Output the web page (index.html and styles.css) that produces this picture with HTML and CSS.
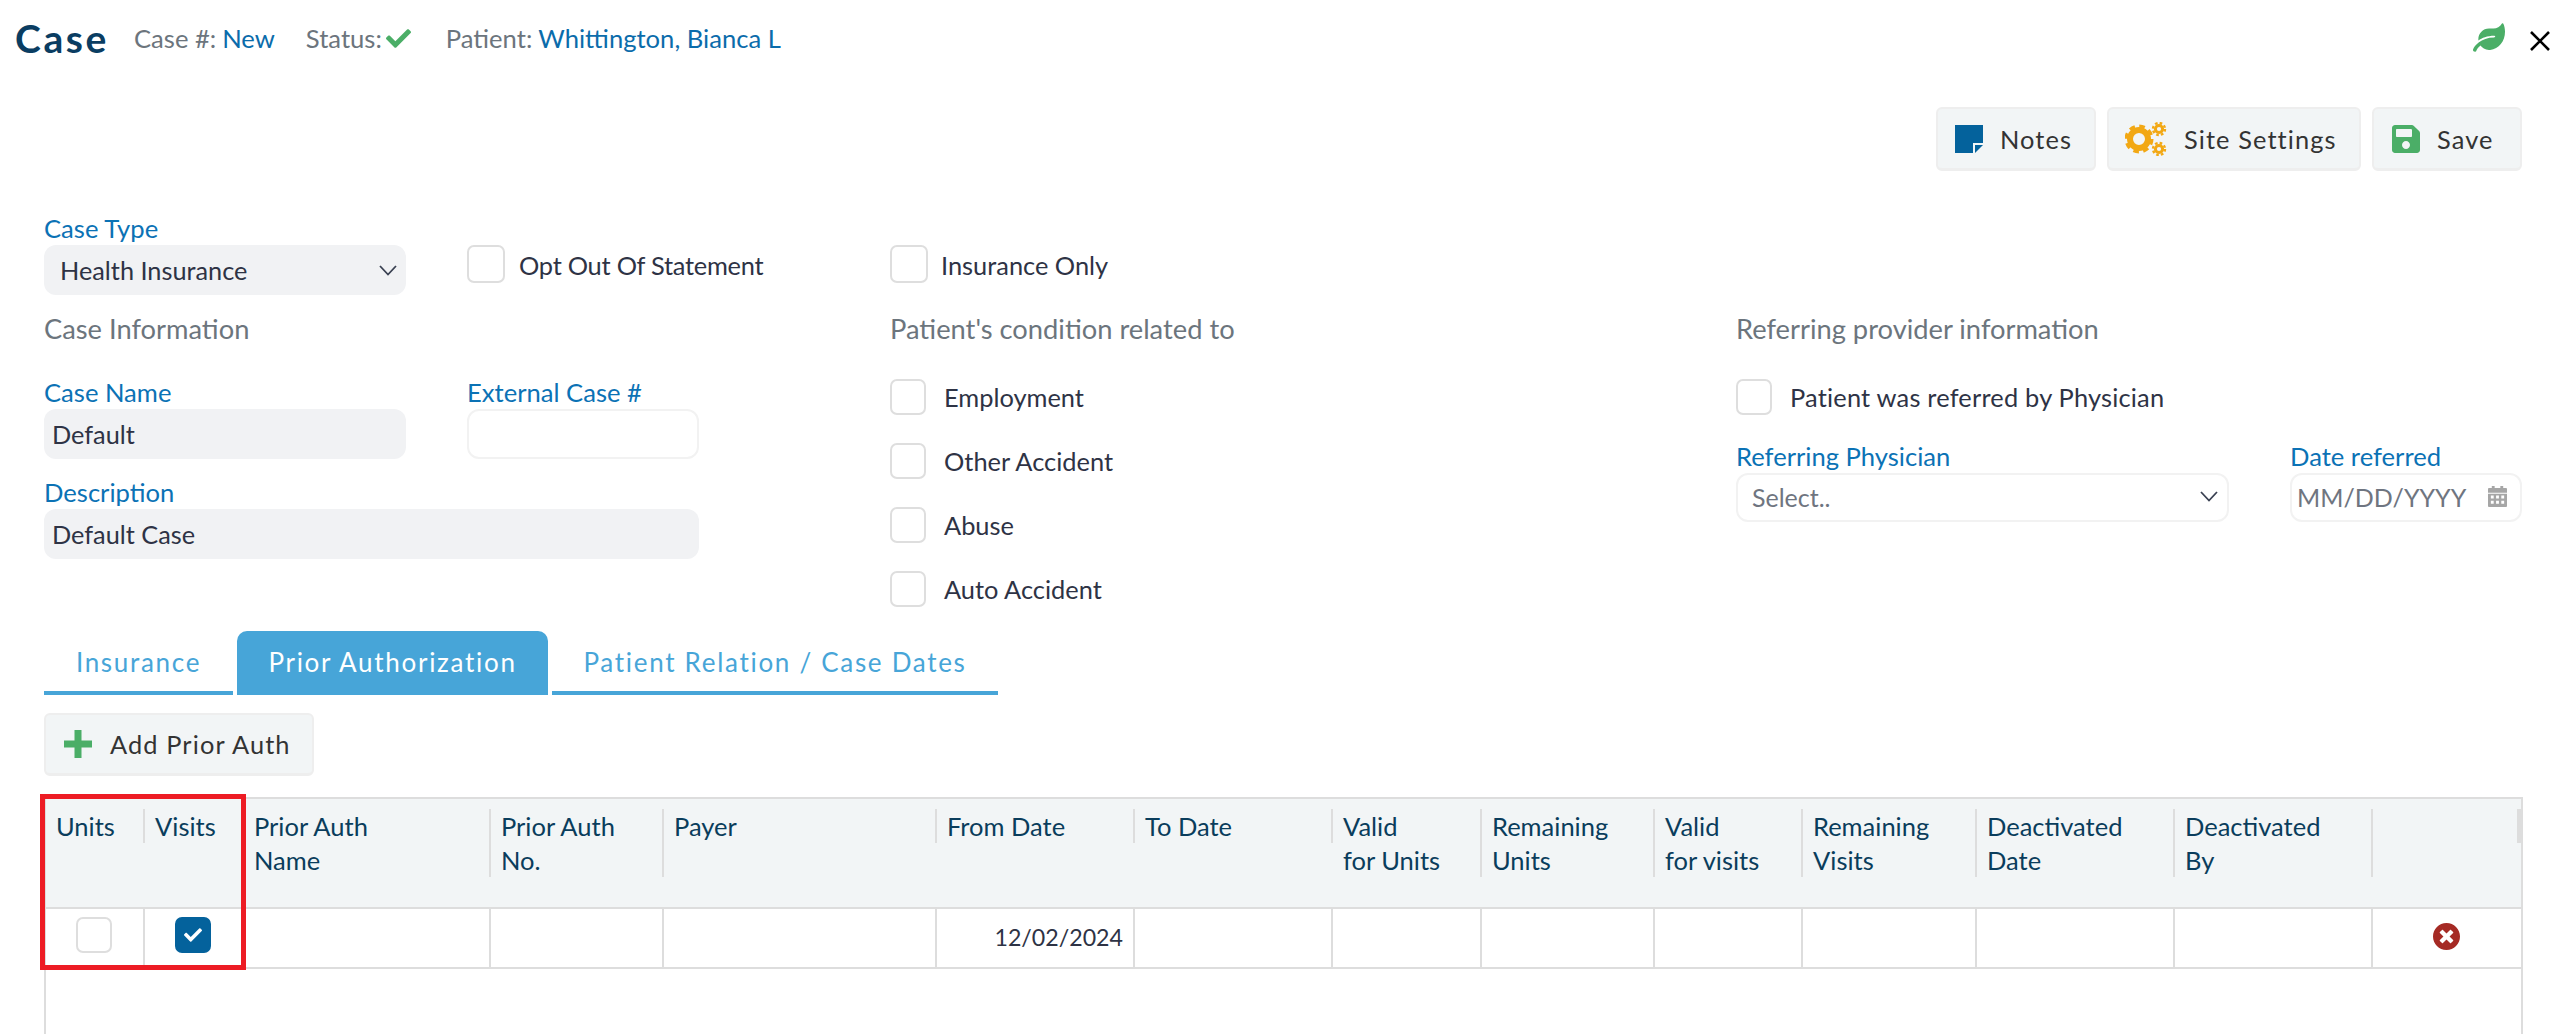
FILE: index.html
```html
<!DOCTYPE html>
<html lang="en">
<head>
<meta charset="utf-8">
<title>Case</title>
<link rel="stylesheet" href="styles.css">
</head>
<body>
<header class="topbar">
  <h1 class="title">Case</h1>
  <div class="meta meta-case"><span class="meta-key">Case #:</span> <span class="meta-val">New</span></div>
  <div class="meta meta-status"><span class="meta-key">Status:</span>
    <svg class="status-check" viewBox="0 0 512 512"><path d="M173.898 439.404l-166.4-166.4c-9.997-9.997-9.997-26.206 0-36.204l36.203-36.204c9.997-9.998 26.207-9.998 36.204 0L192 312.69 432.095 72.596c9.997-9.997 26.207-9.997 36.204 0l36.203 36.204c9.997 9.997 9.997 26.206 0 36.204l-294.4 294.401c-9.998 9.997-26.207 9.997-36.204-.001z"/></svg>
  </div>
  <div class="meta"><span class="meta-key">Patient:</span> <span class="meta-val">Whittington, Bianca L</span></div>
  <div class="top-icons">
    <svg class="leaf" viewBox="0 0 576 512"><path d="M546.2 9.7c-5.6-12.5-21.6-13-28.3-1.2C486.9 62.4 431.4 96 368 96h-80C182 96 96 182 96 288c0 7 .8 13.7 1.5 20.5C161.3 262.8 253.4 224 384 224c8.8 0 16 7.2 16 16s-7.2 16-16 16C132.6 256 26 410.1 2.4 468c-6.6 16.3 1.2 34.9 17.5 41.6 16.4 6.8 35-1.1 41.8-17.3 1.5-3.6 20.9-47.9 71.9-90.6 32.4 43.9 94 85.8 174.9 77.2C465.5 467.5 576 326.7 576 154.3c0-50.2-10.8-102.2-29.8-144.6z"/></svg>
    <svg class="close" viewBox="0 0 20 20"><path d="M1 1L19 19M19 1L1 19"/></svg>
  </div>
</header>

<div class="toolbar">
  <button class="btn btn-notes">
    <svg class="ic-notes" viewBox="0 0 28 28"><path d="M0 0H28V18H18V28H0Z" fill="#04629c"/><path d="M20 20H28L20 28Z" fill="#04629c"/></svg>
    Notes
  </button>
  <button class="btn btn-site">
    <svg class="ic-gears" viewBox="0 0 42 34">
      <g fill="none" stroke="#f2a814">
        <circle cx="14" cy="17" r="9" stroke-width="6"/>
        <circle cx="14" cy="17" r="12.5" stroke-width="4" stroke-dasharray="5.5 4.3"/>
        <circle cx="34" cy="7" r="3.6" stroke-width="3"/>
        <circle cx="34" cy="7" r="6" stroke-width="2.4" stroke-dasharray="2.6 2.1"/>
        <circle cx="34" cy="27" r="3.6" stroke-width="3"/>
        <circle cx="34" cy="27" r="6" stroke-width="2.4" stroke-dasharray="2.6 2.1"/>
      </g>
    </svg>
    Site Settings
  </button>
  <button class="btn btn-save">
    <svg class="ic-save" viewBox="0 32 448 448"><path fill="#4bae67" d="M433.941 129.941l-83.882-83.882A48 48 0 0 0 316.118 32H48C21.49 32 0 53.49 0 80v352c0 26.51 21.49 48 48 48h352c26.51 0 48-21.49 48-48V163.882a48 48 0 0 0-14.059-33.941zM224 416c-35.346 0-64-28.654-64-64 0-35.346 28.654-64 64-64s64 28.654 64 64c0 35.346-28.654 64-64 64zm96-304.52V212c0 6.627-5.373 12-12 12H76c-6.627 0-12-5.373-12-12V108c0-6.627 5.373-12 12-12h228.52c3.183 0 6.235 1.264 8.485 3.515l3.48 3.48A11.996 11.996 0 0 1 320 111.48z"/></svg>
    Save
  </button>
</div>

<main class="content">
  <section class="form-top">
    <div class="col-a top-a">
      <div class="field">
        <label class="label">Case Type</label>
        <div class="control filled select">Health Insurance
          <svg class="chev" viewBox="0 0 18 11"><path d="M1 1L9 9.500L17 1"/></svg>
        </div>
      </div>
      <div class="check-row top-check"><span class="box box-lg"></span><span class="check-text narrow">Opt Out Of Statement</span></div>
    </div>
    <div class="col-b">
      <div class="check-row top-check tight"><span class="box box-lg"></span><span class="check-text">Insurance Only</span></div>
    </div>
  </section>

  <section class="form-main">
    <div class="col-a">
      <h2 class="section-title">Case Information</h2>
      <div class="info-grid">
        <div class="field">
          <label class="label">Case Name</label>
          <div class="control filled small-pad">Default</div>
        </div>
        <div class="field">
          <label class="label">External Case #</label>
          <div class="control empty"></div>
        </div>
        <div class="field span2">
          <label class="label">Description</label>
          <div class="control filled small-pad">Default Case</div>
        </div>
      </div>
    </div>
    <div class="col-b">
      <h2 class="section-title">Patient's condition related to</h2>
      <div class="check-list">
        <div class="check-row"><span class="box"></span><span class="check-text">Employment</span></div>
        <div class="check-row"><span class="box"></span><span class="check-text">Other Accident</span></div>
        <div class="check-row"><span class="box"></span><span class="check-text">Abuse</span></div>
        <div class="check-row"><span class="box"></span><span class="check-text">Auto Accident</span></div>
      </div>
    </div>
    <div class="col-c">
      <h2 class="section-title">Referring provider information</h2>
      <div class="check-list">
        <div class="check-row"><span class="box"></span><span class="check-text wide">Patient was referred by Physician</span></div>
      </div>
      <div class="ref-grid">
        <div class="field">
          <label class="label">Referring Physician</label>
          <div class="control outline select placeholder">Select..
            <svg class="chev" viewBox="0 0 18 11"><path d="M1 1L9 9.500L17 1"/></svg>
          </div>
        </div>
        <div class="field">
          <label class="label">Date referred</label>
          <div class="control outline date placeholder">MM/DD/YYYY
            <svg class="cal" viewBox="0 0 20 22"><path fill="#a6a6a6" d="M4 0h3v3H4zM13 0h3v3h-3zM1 2h18a1 1 0 0 1 1 1v4H0V3a1 1 0 0 1 1-1zM0 8h20v13a1 1 0 0 1-1 1H1a1 1 0 0 1-1-1z"/><path fill="#fff" d="M3 10h3v3H3zM8.500 10h3v3h-3zM14 10h3v3h-3zM3 15.500h3v3H3zM8.500 15.500h3v3h-3zM14 15.500h3v3h-3z"/></svg>
          </div>
        </div>
      </div>
    </div>
  </section>

  <nav class="tabs">
    <a class="tab tab-1">Insurance</a>
    <a class="tab tab-2 active">Prior Authorization</a>
    <a class="tab tab-3">Patient Relation / Case Dates</a>
  </nav>

  <button class="btn btn-add">
    <svg class="ic-plus" viewBox="0 0 28 28"><path d="M14 0V28M0 14H28"/></svg>
    Add Prior Auth
  </button>

  <div class="table-wrap">
    <table class="grid">
      <colgroup>
        <col class="c-99"><col class="c-99"><col class="c-247"><col class="c-173"><col class="c-273"><col class="c-198"><col class="c-198"><col class="c-149"><col class="c-173"><col class="c-148"><col class="c-174"><col class="c-198"><col class="c-198"><col class="c-last">
      </colgroup>
      <thead>
        <tr>
          <th><div class="th">Units</div></th>
          <th><div class="th">Visits</div></th>
          <th><div class="th">Prior Auth<br>Name</div></th>
          <th><div class="th">Prior Auth<br>No.</div></th>
          <th><div class="th">Payer</div></th>
          <th><div class="th">From Date</div></th>
          <th><div class="th">To Date</div></th>
          <th><div class="th">Valid<br>for Units</div></th>
          <th><div class="th">Remaining<br>Units</div></th>
          <th><div class="th">Valid<br>for visits</div></th>
          <th><div class="th">Remaining<br>Visits</div></th>
          <th><div class="th">Deactivated<br>Date</div></th>
          <th><div class="th">Deactivated<br>By</div></th>
          <th><div class="th th-last">&nbsp;</div></th>
        </tr>
      </thead>
      <tbody>
        <tr>
          <td class="center"><span class="box box-sm"></span></td>
          <td class="center"><span class="box box-sm checked"><svg viewBox="0 0 512 512"><path d="M173.898 439.404l-166.4-166.4c-9.997-9.997-9.997-26.206 0-36.204l36.203-36.204c9.997-9.998 26.207-9.998 36.204 0L192 312.69 432.095 72.596c9.997-9.997 26.207-9.997 36.204 0l36.203 36.204c9.997 9.997 9.997 26.206 0 36.204l-294.4 294.401c-9.998 9.997-26.207 9.997-36.204-.001z"/></svg></span></td>
          <td></td><td></td><td></td>
          <td class="right">12/02/2024</td>
          <td></td><td></td><td></td><td></td><td></td><td></td><td></td>
          <td class="center"><svg class="ic-del" viewBox="8 8 496 496"><path d="M256 8C119 8 8 119 8 256s111 248 248 248 248-111 248-248S393 8 256 8zm121.6 313.1c4.7 4.7 4.7 12.3 0 17L338 377.6c-4.7 4.7-12.3 4.7-17 0L256 312l-65.1 65.6c-4.7 4.7-12.3 4.7-17 0L134.4 338c-4.7-4.7-4.7-12.3 0-17l65.6-65-65.6-65.1c-4.7-4.7-4.7-12.3 0-17l39.6-39.6c4.7-4.7 12.3-4.7 17 0l65 65.7 65.1-65.6c4.7-4.7 12.3-4.7 17 0l39.6 39.6c4.700 4.700 4.700 12.300 0 17L312 256l65.600 65.100z"/></svg></td>
        </tr>
      </tbody>
    </table>
    <div class="highlight"></div>
  </div>
</main>
</body>
</html>
```

FILE: styles.css
```css
* { box-sizing: border-box; }
html, body { margin: 0; height: 1034px; overflow: hidden; background: #fff; }
body { font-family: "Lato", "Noto Sans", sans-serif; font-size: 25.4px; color: #2e3345; }

/* Header */
.topbar { display: flex; align-items: center; height: 76px; padding: 0 18px 0 15px; }
.title { margin: 0 27px 0 0; width: 92px; font-size: 39px; font-weight: 700; letter-spacing: 2.6px; color: #0a3d62; line-height: 76px; }
.meta { display: flex; align-items: center; gap: 6px; font-size: 25.6px; margin-right: 32px; height: 40px; white-space: pre; }
.meta-case { margin-right: 31px; }
.meta-status { margin-right: 35px; }
.meta-key { color: #6c757d; }
.meta-val { color: #0b6cab; }
.status-check { width: 25px; height: 25px; fill: #4bae67; margin-left: -2px; }
.top-icons { margin-left: auto; display: flex; align-items: center; gap: 25px; }
.leaf { width: 32px; height: 29px; fill: #4bae67; margin-top: -2px; }
.close { width: 20px; height: 20px; fill: none; stroke: #000; stroke-width: 2.6; margin-top: 6px; }

/* Buttons */
.toolbar { display: flex; justify-content: flex-end; gap: 11px; padding: 31px 46px 0 0; }
.btn { display: flex; align-items: center; height: 64px; padding: 0; border: 2px solid #eeeeee; border-bottom-width: 3px; border-radius: 6px; background: #f2f5f6; font-family: inherit; font-size: 25.4px; letter-spacing: 1.1px; color: #333; white-space: nowrap; }
.btn-notes { width: 160px; padding-left: 17px; gap: 17px; }
.btn-site { width: 254px; padding-left: 16px; gap: 17px; }
.btn-save { width: 150px; padding-left: 18px; gap: 17px; }
.ic-notes { width: 28px; height: 28px; }
.ic-gears { width: 42px; height: 34px; }
.ic-save { width: 28px; height: 28px; }

/* Form */
.content { padding: 40px 46px 0 44px; }
.form-top, .form-main { display: grid; grid-template-columns: 846px 846px 786px; }
.form-main { margin-top: 18px; }
.top-a { display: grid; grid-template-columns: 362px 232px; column-gap: 61px; }
.field { display: flex; flex-direction: column; }
.label { display: block; height: 34px; line-height: 35px; font-size: 25.6px; color: #0b72b5; white-space: nowrap; }
.control { height: 50px; border-radius: 12px; display: flex; align-items: center; font-size: 25.3px; line-height: 48px; }
.filled { background: #f1f2f4; padding-left: 16px; color: #2e3345; }
.small-pad { padding-left: 8px; }
.empty, .outline { background: #fff; border: 2px solid #f2f2f2; }
.outline { padding-bottom: 2px; }
.select { justify-content: space-between; padding-right: 9px; }
.placeholder { color: #6f7580; font-size: 25px; }
.outline.select { padding-left: 14px; }
.date { padding-left: 5px; padding-right: 13px; justify-content: space-between; }
.chev { width: 18px; height: 11px; fill: none; stroke: #3a4152; stroke-width: 1.8; }
.cal { width: 19px; height: 21px; }

.check-row { display: flex; align-items: center; }
.check-text { font-size: 25.4px; color: #2e3345; margin-left: 18px; white-space: nowrap; }
.narrow { letter-spacing: -0.25px; }
.wide { letter-spacing: 0.2px; }
.box { display: block; flex: none; width: 36px; height: 36px; border: 2px solid #dedede; border-radius: 7px; background: #fff; }
.box-lg { width: 38px; height: 38px; }
.top-check { align-items: flex-start; margin-top: 34px; }
.top-check .check-text { margin-left: 14px; line-height: 41px; }
.top-check.tight .check-text { margin-left: 13px; }

.section-title { margin: 0; height: 34px; line-height: 32px; font-size: 27.3px; font-weight: 400; color: #6c757d; white-space: nowrap; }
.info-grid { display: grid; grid-template-columns: 362px 232px; column-gap: 61px; margin-top: 28px; row-gap: 16px; }
.span2 { grid-column: 1 / 3; }
.check-list { display: flex; flex-direction: column; gap: 28px; margin-top: 32px; }
.ref-grid { display: grid; grid-template-columns: 493px 232px; column-gap: 61px; margin-top: 24px; }
.ref-grid .control { height: 49px; }

/* Tabs */
.tabs { display: flex; gap: 4px; margin-top: 24px; height: 64px; }
.tab { display: flex; align-items: center; justify-content: center; height: 64px; padding-top: 1px; font-size: 26px; letter-spacing: 1.7px; color: #47a5d8; border-bottom: 4px solid #47a5d8; }
.tab-1 { width: 189px; }
.tab-2 { width: 311px; }
.tab-3 { width: 446px; }
.active { background: #47a5d8; color: #fff; border-radius: 10px 10px 0 0; }

.btn-add { width: 270px; height: 63px; margin-top: 18px; padding-left: 18px; gap: 18px; }
.ic-plus { width: 28px; height: 28px; fill: none; stroke: #4bae67; stroke-width: 7; }

/* Table */
.table-wrap { position: relative; margin-top: 21px; margin-right: -1px; height: 237px; border-left: 2px solid #ddd; border-right: 2px solid #ddd; }
.grid { width: 2475px; table-layout: fixed; border-collapse: separate; border-spacing: 0; }
.c-99 { width: 99px; } .c-247 { width: 247px; } .c-173 { width: 173px; } .c-273 { width: 273px; }
.c-198 { width: 198px; } .c-149 { width: 149px; } .c-148 { width: 148px; } .c-174 { width: 174px; } .c-last { width: 148px; }
.grid th { height: 112px; padding: 10px 0 0; vertical-align: top; text-align: left; font-weight: 400; background: #f2f5f6; border-top: 2px solid #ddd; border-bottom: 2px solid #ddd; }
.th { padding-left: 10px; font-size: 25.5px; line-height: 34px; color: #0a3d5c; border-right: 2px solid #ddd; white-space: nowrap; }
.th-last { border-right: 4px solid #ddd; }
.grid td { height: 60px; padding: 0; border-right: 2px solid #ddd; border-bottom: 2px solid #ddd; font-size: 23.2px; color: #2e3345; }
.grid td:last-child { border-right: 0; }
.grid td.center { text-align: center; vertical-align: top; padding: 8px 2px 0 0; line-height: 0; }
.grid td.right { text-align: right; padding: 0 10px 3px 0; }
.box-sm { display: inline-flex; align-items: center; justify-content: center; width: 36px; height: 36px; }
.checked { background: #04629c; border-color: #04629c; }
.checked svg { width: 18px; height: 18px; fill: #fff; }
.ic-del { width: 27px; height: 27px; fill: #a52a24; margin-top: 6px; }
.highlight { position: absolute; left: -6px; top: -3px; width: 206px; height: 176px; border: 5px solid #ed1c24; pointer-events: none; }
```
